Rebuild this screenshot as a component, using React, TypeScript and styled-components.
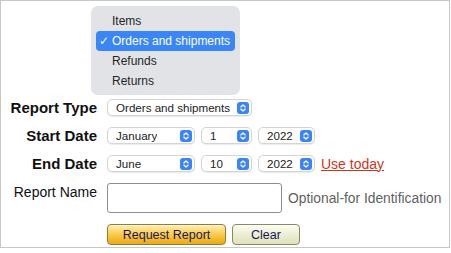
import React from "react";
import styled, { createGlobalStyle } from "styled-components";

const GlobalStyle = createGlobalStyle`
  html, body {
    margin: 0;
    padding: 0;
    background: #ffffff;
    font-family: "Liberation Sans", Arial, sans-serif;
  }
`;

const ARROWS = (
  <svg width="12" height="12" viewBox="0 0 12 12">
    <rect x="0" y="0" width="12" height="12" rx="3" fill="#3b84f6" />
    <path d="M3.8 4.9 L6 2.9 L8.2 4.9" fill="none" stroke="#fff" strokeWidth="1.3" strokeLinecap="round" strokeLinejoin="round" />
    <path d="M3.8 7.1 L6 9.1 L8.2 7.1" fill="none" stroke="#fff" strokeWidth="1.3" strokeLinecap="round" strokeLinejoin="round" />
  </svg>
);

const reportTypes = ["Items", "Orders and shipments", "Refunds", "Returns"];

interface SelProps {
  value: string;
  width: number;
}

const FakeSelect: React.FC<SelProps> = ({ value, width }) => {
  return (
    <SelectBox $w={width}>
      <SelectText>{value}</SelectText>
      {ARROWS}
    </SelectBox>
  );
};

const App: React.FC = () => {
  return (
    <>
      <GlobalStyle />
      <Frame>
        <Menu>
          {reportTypes.map((m, i) => (
            <MenuItem key={m} $active={i === 1}>
              <Check>{i === 1 ? "✓" : ""}</Check>
              {m}
            </MenuItem>
          ))}
        </Menu>

        <Form>
          <Label>Report Type</Label>
          <Controls>
            <FakeSelect value="Orders and shipments" width={145} />
          </Controls>

          <Label>Start Date</Label>
          <Controls>
            <FakeSelect value="January" width={88} />
            <FakeSelect value="1" width={51} />
            <FakeSelect value="2022" width={57} />
          </Controls>

          <Label>End Date</Label>
          <Controls>
            <FakeSelect value="June" width={88} />
            <FakeSelect value="10" width={51} />
            <FakeSelect value="2022" width={57} />
            <TodayLink href="#">Use today</TodayLink>
          </Controls>

          <PlainLabel>Report Name</PlainLabel>
          <Controls>
            <NameInput type="text" />
            <Hint>Optional-for Identification</Hint>
          </Controls>

          <span />
          <Buttons>
            <RequestButton>Request Report</RequestButton>
            <ClearButton>Clear</ClearButton>
          </Buttons>
        </Form>
      </Frame>
    </>
  );
};

export default App;

const Frame = styled.div`
  position: relative;
  box-sizing: border-box;
  width: 450px;
  height: 248px;
  border: 1px solid #c6c6c6;
  padding-top: 98px;
`;

const Menu = styled.div`
  position: absolute;
  left: 90px;
  top: 5px;
  width: 149px;
  box-sizing: border-box;
  padding: 5px 5px 4px;
  background: #e1e3e7;
  border-radius: 7px;
  z-index: 2;
`;

const MenuItem = styled.div<{ $active: boolean }>`
  display: flex;
  align-items: center;
  height: 20px;
  border-radius: 4px;
  font-size: 12px;
  color: ${(p) => (p.$active ? "#ffffff" : "#262626")};
  background: ${(p) => (p.$active ? "#3a86f6" : "transparent")};
  white-space: nowrap;
`;

const Check = styled.span`
  display: inline-block;
  width: 16px;
  padding-left: 3px;
  box-sizing: border-box;
  font-family: "DejaVu Sans", sans-serif;
  font-size: 12px;
`;

const Form = styled.div`
  display: grid;
  grid-template-columns: 96px auto;
  column-gap: 10px;
  row-gap: 11px;
  align-items: center;
`;

const Label = styled.div`
  text-align: right;
  font-weight: bold;
  font-size: 15px;
  line-height: 17px;
  color: #111;
  white-space: nowrap;
`;

const PlainLabel = styled.div`
  align-self: start;
  margin-top: 1px;
  text-align: right;
  font-size: 14px;
  line-height: 16px;
  color: #111;
  white-space: nowrap;
`;

const Controls = styled.div`
  display: flex;
  align-items: center;
  gap: 6px;
`;

const SelectBox = styled.div<{ $w: number }>`
  box-sizing: border-box;
  width: ${(p) => p.$w}px;
  height: 17px;
  display: flex;
  align-items: center;
  justify-content: space-between;
  padding: 0 2px 0 8px;
  background: #fff;
  border: 1px solid #d4d4d4;
  border-radius: 5px;
  box-shadow: 0 1px 1px rgba(0, 0, 0, 0.08);
`;

const SelectText = styled.span`
  font-size: 11.6px;
  color: #222;
  white-space: nowrap;
  overflow: hidden;
`;

const TodayLink = styled.a`
  font-size: 14px;
  color: #c8371b;
  text-decoration: underline;
  white-space: nowrap;
`;

const NameInput = styled.input`
  box-sizing: border-box;
  width: 175px;
  height: 30px;
  margin: 0;
  border: 1px solid #8e8e8e;
  border-radius: 3px;
  background: #fff;
`;

const Hint = styled.span`
  font-size: 13.8px;
  color: #5f5f5f;
  white-space: nowrap;
`;

const Buttons = styled.div`
  display: flex;
  gap: 6px;
`;

const BaseButton = styled.button`
  box-sizing: border-box;
  height: 21px;
  padding: 0;
  border-radius: 4px;
  font-family: "Liberation Sans", Arial, sans-serif;
  font-size: 12.5px;
  color: #14185c;
  cursor: pointer;
`;

const RequestButton = styled(BaseButton)`
  width: 119px;
  border: 1px solid #9a7a2c;
  background: linear-gradient(#fff0b8 0%, #fbd66a 35%, #f3bd2e 70%, #eaa919 100%);
  box-shadow: inset 0 1px 0 rgba(255, 255, 255, 0.6);
`;

const ClearButton = styled(BaseButton)`
  width: 68px;
  border: 1px solid #8a8a5e;
  background: linear-gradient(#fdfdf3 0%, #efefd6 45%, #e0e0bc 100%);
  box-shadow: inset 0 1px 0 rgba(255, 255, 255, 0.7);
`;
